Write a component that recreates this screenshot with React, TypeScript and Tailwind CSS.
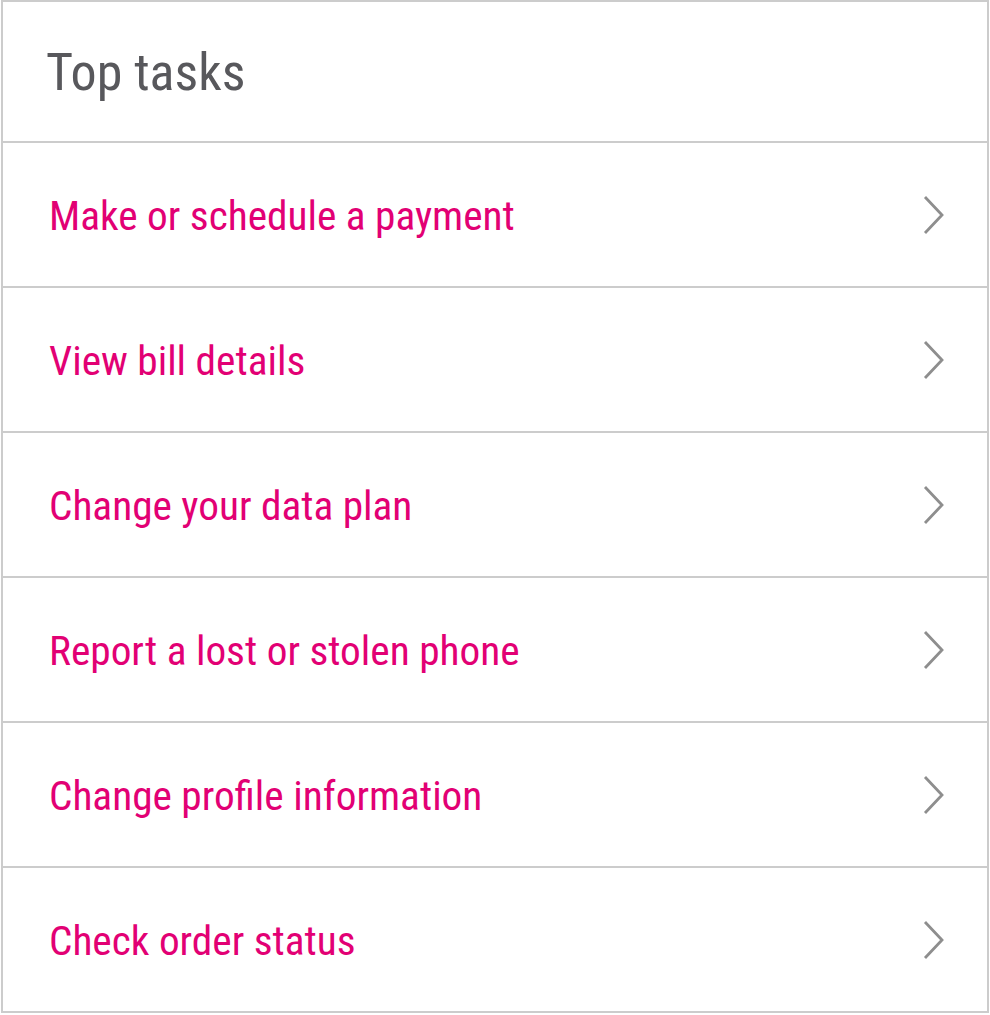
import React from "react";

const tasks = [
  "Make or schedule a payment",
  "View bill details",
  "Change your data plan",
  "Report a lost or stolen phone",
  "Change profile information",
  "Check order status",
];

function Chevron() {
  return (
    <svg width="22" height="40" viewBox="0 0 22 40" fill="none" className="shrink-0">
      <path d="M2 2 L19 20 L2 38" stroke="#8e8e8e" strokeWidth="2.8" strokeLinecap="butt" strokeLinejoin="miter" />
    </svg>
  );
}

export default function App() {
  const font = { fontFamily: '"Roboto Condensed", Roboto, "Liberation Sans Narrow", sans-serif' };
  return (
    <div className="bg-white w-[990px] h-[1015px]">
      <div className="ml-[1px] w-[988px] border-2 border-[#cccccc] bg-white [font-stretch:75%]" style={font}>
        <div className="h-[139px] flex items-center pl-[43px]">
          <h1 className="text-[52px] leading-none text-[#58585c] mt-[3px] [font-stretch:75%]">Top tasks</h1>
        </div>
        {tasks.map((t) => (
          <div key={t} className="h-[145px] border-t-2 border-[#cccccc] flex items-center justify-between pl-[46px] pr-[42px]">
            <span className="text-[41.3px] leading-none text-[#e20074] mt-[4px] [font-stretch:75%]">{t}</span>
            <Chevron />
          </div>
        ))}
      </div>
    </div>
  );
}
